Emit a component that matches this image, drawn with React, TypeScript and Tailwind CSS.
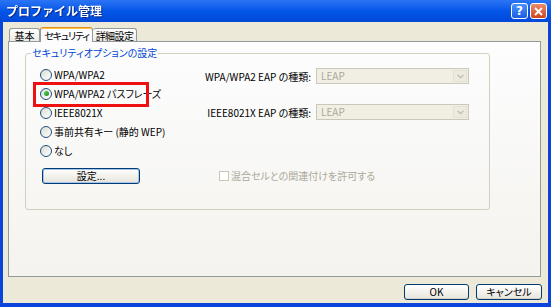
import React from 'react'

function Radio({ checked }: { checked?: boolean }) {
    return (
        <span className="flex items-center justify-center w-[12px] h-[12px] shrink-0 rounded-full border border-[#1C5180] bg-linear-to-br from-[#DCDCD4] to-white">
            {checked && <span className="w-[5px] h-[5px] rounded-full bg-linear-to-br from-[#5FD25F] to-[#168C16]" />}
        </span>
    )
}

function XpButton({ label, width, focused }: { label: string; width: string; focused?: boolean }) {
    return (
        <button
            className={`${width} h-[16px] flex items-center justify-center rounded-[3px] border border-[#003C74] bg-linear-to-b from-white to-[#E6E4DA] text-black leading-none whitespace-nowrap ${
                focused ? 'shadow-[inset_0_0_0_1px_#A8C3EE]' : 'shadow-[inset_0_-1px_0_#D6D0C5]'
            }`}
        >
            {label}
        </button>
    )
}

function DisabledCombo() {
    return (
        <div className="flex w-[153px] h-[16px] border border-[#CBC8BA] bg-[#F1EFE3]">
            <span className="flex-1 pl-[4px] leading-[14px] text-[#ACA899]">LEAP</span>
            <span className="flex items-center justify-center w-[14px] m-px bg-[#EDEBE1] border border-[#E4E1D4]">
                <svg width="7" height="5" viewBox="0 0 7 5" aria-hidden="true">
                    <path d="M0.5 0.8 L3.5 3.8 L6.5 0.8" fill="none" stroke="#C3C0B2" strokeWidth="1.3" />
                </svg>
            </span>
        </div>
    )
}

const options = ['WPA/WPA2', 'WPA/WPA2 パスフレーズ', 'IEEE8021X', '事前共有キー (静的 WEP)', 'なし']

export default function App() {
    return (
        <div className="w-[551px] h-[307px] flex flex-col bg-[#0B44DA] font-['Noto_Sans_CJK_JP',sans-serif] text-[10px] [font-feature-settings:'palt'] text-black select-none">
            {/* Title bar */}
            <div className="h-[22px] shrink-0 flex items-center pl-[6px] pr-[4px] bg-linear-to-b from-[#2A74F4] via-[#0356E8] to-[#0248D8]">
                <span className="flex-1 text-[12px] font-bold text-white [font-feature-settings:normal] drop-shadow-[1px_1px_0_#0A2A8A]">
                    プロファイル管理
                </span>
                <div className="flex gap-[2px]">
                    <span className="flex items-center justify-center w-[17px] h-[16px] rounded-[3px] border border-white bg-linear-to-b from-[#4A92FC] to-[#1D5CE0] text-white font-bold text-[12px] leading-none font-['DejaVu_Sans',sans-serif]">
                        ?
                    </span>
                    <span className="flex items-center justify-center w-[17px] h-[16px] rounded-[3px] border border-white bg-linear-to-b from-[#EC8B6C] to-[#CC4418]">
                        <svg width="9" height="9" viewBox="0 0 9 9" aria-hidden="true">
                            <path d="M1 1 L8 8 M8 1 L1 8" stroke="white" strokeWidth="1.8" />
                        </svg>
                    </span>
                </div>
            </div>

            {/* Dialog body */}
            <div className="flex-1 mx-[3px] mb-[4px] bg-[#ECE9D8] flex flex-col">
                {/* Tabs */}
                <div className="h-[19px] shrink-0 flex items-end pl-[6px] relative z-10 whitespace-nowrap">
                    <div className="w-[31px] h-[13px] flex items-center justify-center border border-b-0 border-[#919B9C] rounded-t-[3px] bg-linear-to-b from-white to-[#ECEBE6]">
                        基本
                    </div>
                    <div className="w-[53px] h-[15px] -mb-px flex items-center justify-center border border-b-0 border-[#919B9C] border-t-[#E68B2C] rounded-t-[3px] bg-[#FCFCFE] shadow-[inset_0_1px_0_#FFC73C] tracking-[-1.2px]">
                        セキュリティ
                    </div>
                    <div className="w-[44px] h-[13px] flex items-center justify-center border border-b-0 border-l-0 border-[#919B9C] rounded-t-[3px] bg-linear-to-b from-white to-[#ECEBE6] tracking-[-0.6px]">
                        詳細設定
                    </div>
                </div>

                {/* Tab panel */}
                <div className="ml-[5px] mr-[7px] h-[236px] shrink-0 border border-[#919B9C] bg-linear-to-b from-[#FDFDFE] to-[#F4F3EE] pl-[16px] pt-[5px]">
                    <fieldset className="w-[465px] border border-[#D0D0BF] rounded-[3px] p-0 m-0">
                        <legend className="ml-[5px] px-px leading-[12px] text-[#0046D5]">セキュリティオプションの設定</legend>
                        <div className="flex pl-[14px] pb-[25px]">
                            {/* Left: radio options */}
                            <div className="w-[165px] flex flex-col pt-[6px]">
                                {options.map((label, i) => (
                                    <div key={label} className="relative h-[19px] flex items-center gap-[2px] whitespace-nowrap">
                                        <Radio checked={i === 1} />
                                        <span>{label}</span>
                                        {i === 1 && (
                                            <span className="absolute -left-[7px] -top-[2px] w-[116px] h-[25px] border-[3px] border-[#EE1111] pointer-events-none" />
                                        )}
                                    </div>
                                ))}
                                <div className="mt-[8px] ml-[2px]">
                                    <XpButton label="設定..." width="w-[98px]" focused />
                                </div>
                            </div>

                            {/* Right: EAP types */}
                            <div className="flex flex-col whitespace-nowrap">
                                <div className="mt-[9px] flex items-center gap-[5px]">
                                    <span className="w-[106px] text-right">WPA/WPA2 EAP の種類:</span>
                                    <DisabledCombo />
                                </div>
                                <div className="mt-[20px] flex items-center gap-[5px]">
                                    <span className="w-[106px] text-right">IEEE8021X EAP の種類:</span>
                                    <DisabledCombo />
                                </div>
                                <div className="mt-[48px] ml-[14px] h-[15px] flex items-center gap-[2px] text-[#ACA899]">
                                    <span className="w-[10px] h-[10px] border border-[#CBC7B8] bg-white" />
                                    <span>混合セルとの関連付けを許可する</span>
                                </div>
                            </div>
                        </div>
                    </fieldset>
                </div>

                {/* Dialog buttons */}
                <div className="mt-[7px] mr-[6px] flex justify-end gap-[7px]">
                    <XpButton label="OK" width="w-[65px]" />
                    <XpButton label="キャンセル" width="w-[66px]" />
                </div>
            </div>
        </div>
    )
}
